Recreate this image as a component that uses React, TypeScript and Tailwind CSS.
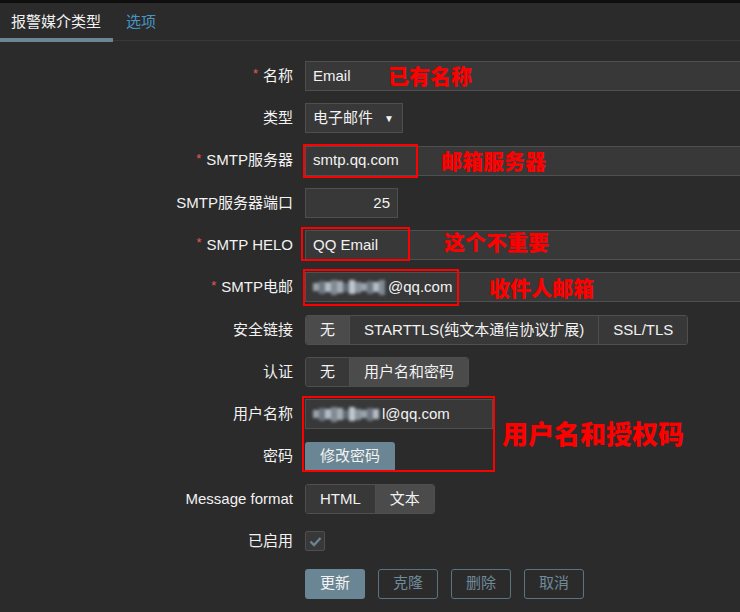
import React from "react";

const font = { fontFamily: '"Liberation Sans", Arial, "Noto Sans CJK SC", sans-serif' };
const redFont = { fontFamily: '"Noto Sans CJK SC", "Liberation Sans", sans-serif' };

function Label({ text, req }: { text: string; req?: boolean }) {
  return (
    <div className="h-[30px] flex items-center justify-end text-[15px] text-[#f2f2f2] whitespace-nowrap">
      {req && <span className="text-[#e45959] text-[13px] mr-[5px] relative top-[-2px]">*</span>}
      {text}
    </div>
  );
}

function Blur({ w }: { w: number }) {
  const cols = ["#9aa3ab", "#6d7680", "#b4bcc4", "#7f8a94", "#a5adb5", "#5f6a74", "#c0c6cc", "#8a949e"];
  return (
    <span className="inline-flex items-center h-[18px] blur-[1.5px] mr-[1px]" style={{ width: w }}>
      {Array.from({ length: Math.round(w / 6) }).map((_, i) => (
        <span key={i} className="inline-block w-[6px]" style={{ height: 8 + ((i * 5) % 8), background: cols[i % cols.length] }} />
      ))}
    </span>
  );
}

const inputCls = "h-[30px] bg-[#383838] border border-[#4f4f4f] flex items-center px-[7px] text-[15px] text-[#f2f2f2]";
const redText = "absolute text-[#ff0000] font-black whitespace-nowrap leading-none";

function Seg({ items, sel }: { items: string[]; sel: number }) {
  return (
    <div className="inline-flex h-[30px] border border-[#4f4f4f] rounded-[3px] overflow-hidden">
      {items.map((t, i) => (
        <div
          key={t}
          className={`flex items-center px-[14px] text-[15px] text-[#f2f2f2] whitespace-nowrap ${i > 0 ? "border-l border-[#4f4f4f]" : ""} ${i === sel ? "bg-[#4b4b4b]" : "bg-[#383838]"}`}
        >
          {t}
        </div>
      ))}
    </div>
  );
}

export default function App() {
  return (
    <div className="w-[740px] h-[612px] overflow-hidden bg-[#2b2b2b] relative" style={font}>
      <div className="h-[3px] bg-[#0e0e0e]" />
      <div className="h-[39px] flex items-end relative">
        <div className="absolute left-0 right-0 bottom-[1px] h-[1px] bg-[#383838]" />
        <div className="relative w-[113px] h-full flex items-center pl-[11px] text-[15px] text-[#f2f2f2]">
          报警媒介类型
          <div className="absolute left-0 right-0 bottom-0 h-[4px] bg-[#6a8593]" />
        </div>
        <div className="h-full flex items-center pl-[13px] text-[15px] text-[#4796c4]">选项</div>
      </div>

      <div className="grid grid-cols-[293px_1fr] gap-x-[12px] gap-y-[12.3px] pt-[19px]">
        <Label text="名称" req />
        <div className="relative">
          <div className={`${inputCls} w-[460px]`}>Email</div>
          <span className={`${redText} left-[83px] top-[4px] text-[21px]`} style={redFont}>已有名称</span>
        </div>

        <Label text="类型" />
        <div>
          <div className={`${inputCls} w-[98px] justify-between pr-[8px]`}>
            <span>电子邮件</span>
            <span className="text-[10px]">▼</span>
          </div>
        </div>

        <Label text="SMTP服务器" req />
        <div className="relative">
          <div className={`${inputCls} w-[460px]`}>smtp.qq.com</div>
          <div className="absolute left-[-2px] top-[-2px] w-[115px] h-[34px] border-2 border-[#ff0000]" />
          <span className={`${redText} left-[136px] top-[4px] text-[21px]`} style={redFont}>邮箱服务器</span>
        </div>

        <Label text="SMTP服务器端口" />
        <div>
          <div className={`${inputCls} w-[93px] justify-end`}>25</div>
        </div>

        <Label text="SMTP HELO" req />
        <div className="relative">
          <div className={`${inputCls} w-[460px]`}>QQ Email</div>
          <div className="absolute left-[-4px] top-[-3px] w-[109px] h-[34px] border-2 border-[#ff0000]" />
          <span className={`${redText} left-[139px] top-[1px] text-[21px]`} style={redFont}>这个不重要</span>
        </div>

        <Label text="SMTP电邮" req />
        <div className="relative">
          <div className={`${inputCls} w-[460px]`}>
            <Blur w={74} />@qq.com
          </div>
          <div className="absolute left-[-2px] top-[-3px] w-[156px] h-[37px] border-2 border-[#ff0000]" />
          <span className={`${redText} left-[184px] top-[5px] text-[21px]`} style={redFont}>收件人邮箱</span>
        </div>

        <Label text="安全链接" />
        <div>
          <Seg items={["无", "STARTTLS(纯文本通信协议扩展)", "SSL/TLS"]} sel={0} />
        </div>

        <Label text="认证" />
        <div>
          <Seg items={["无", "用户名和密码"]} sel={1} />
        </div>

        <Label text="用户名称" />
        <div className="relative">
          <div className={`${inputCls} w-[188px]`}>
            <Blur w={68} />l@qq.com
          </div>
          <div className="absolute left-[-3px] top-[-3px] w-[193px] h-[76px] border-2 border-[#ff0000] pointer-events-none" />
          <span className={`${redText} left-[197px] top-[21px] text-[26px]`} style={redFont}>用户名和授权码</span>
        </div>

        <Label text="密码" />
        <div>
          <div className="h-[30px] w-[90px] bg-[#6a8593] rounded-[3px] flex items-center justify-center text-[15px] text-[#f2f2f2]">修改密码</div>
        </div>

        <Label text="Message format" />
        <div>
          <Seg items={["HTML", "文本"]} sel={1} />
        </div>

        <Label text="已启用" />
        <div className="h-[30px] flex items-center">
          <div className="w-[20px] h-[20px] bg-[#383838] border border-[#4f4f4f] rounded-[2px] flex items-center justify-center">
            <svg width="13" height="11" viewBox="0 0 13 11">
              <path d="M1.5 5.5 L5 9 L11.5 2" fill="none" stroke="#6a8593" strokeWidth="2.4" />
            </svg>
          </div>
        </div>

        <div />
        <div className="flex gap-[13px]">
          <div className="h-[30px] w-[60px] bg-[#6a8593] rounded-[3px] flex items-center justify-center text-[15px] text-[#f2f2f2]">更新</div>
          {["克隆", "删除", "取消"].map((t) => (
            <div key={t} className="h-[30px] w-[60px] border border-[#5b7482] rounded-[3px] flex items-center justify-center text-[15px] text-[#6f8a99]">
              {t}
            </div>
          ))}
        </div>
      </div>
    </div>
  );
}
